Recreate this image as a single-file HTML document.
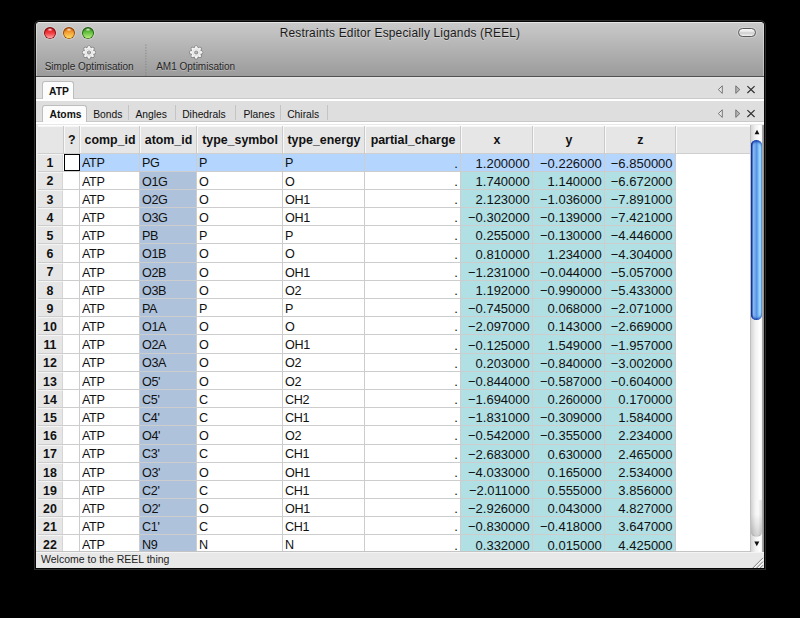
<!DOCTYPE html><html><head><meta charset="utf-8"><style>
*{margin:0;padding:0;box-sizing:border-box}
html,body{width:800px;height:618px;background:#000;overflow:hidden;font-family:"Liberation Sans",sans-serif;color:#000}
.a{position:absolute}
#win{position:absolute;left:36px;top:22px;width:728px;height:546px;background:#e8e8e8;border-radius:4px 4px 0 0;box-shadow:0 0 0 1px #050505,0 0 0 2px #2e2e2e;overflow:hidden}
#tb{position:absolute;left:0;top:0;width:728px;height:55px;background:linear-gradient(#c9c9c9,#9b9b9b);border-top:1px solid #e6e6e6;border-bottom:1px solid #515151;box-shadow:inset 1px 0 0 rgba(255,255,255,.35),inset -1px 0 0 rgba(255,255,255,.35)}
.title{position:absolute;left:0;width:728px;top:2.8px;text-align:center;font-size:11.9px;letter-spacing:0.2px;color:#1a1a1a;text-shadow:0 1px 0 rgba(255,255,255,.35)}
.tl{position:absolute;font-size:10px;color:#262626;text-shadow:0 1px 0 rgba(255,255,255,.3);white-space:nowrap}
.light{position:absolute;width:13px;height:13px;border-radius:50%}
.strip{position:absolute;left:0;width:728px}
.tab{position:absolute;font-size:10.3px;white-space:nowrap;color:#111}
.cell{position:absolute;white-space:nowrap;overflow:hidden;color:#111}
.hd{position:absolute;font-weight:bold;white-space:nowrap;text-align:center;color:#111}
.ln{position:absolute;background:#cdcdcd}
</style></head><body>
<div id="win">
<div id="tb"><div class="title">Restraints Editor Especially Ligands (REEL)</div></div>
<div class="light" style="left:7.8px;top:4.55px;width:12.4px;height:12.4px;background:radial-gradient(ellipse 3px 2px at 50% 20%,rgba(255,255,255,.95),rgba(255,255,255,0)),linear-gradient(#e0141a,#f23a3f 50%,#ffb8b8);box-shadow:inset 0 0 0 0.8px #7a0a0c,inset 0 1.2px 1.6px #7a0a0c,0 0 1px 1px rgba(255,255,255,.22)"></div>
<div class="light" style="left:26.8px;top:4.55px;width:12.4px;height:12.4px;background:radial-gradient(ellipse 3px 2px at 50% 20%,rgba(255,255,255,.95),rgba(255,255,255,0)),linear-gradient(#d9660a,#f5a63a 50%,#ffe46a);box-shadow:inset 0 0 0 0.8px #8f3e00,inset 0 1.2px 1.6px #8f3e00,0 0 1px 1px rgba(255,255,255,.22)"></div>
<div class="light" style="left:45.8px;top:4.55px;width:12.4px;height:12.4px;background:radial-gradient(ellipse 3px 2px at 50% 20%,rgba(255,255,255,.95),rgba(255,255,255,0)),linear-gradient(#2f8a1a,#6cc646 50%,#c6f08a);box-shadow:inset 0 0 0 0.8px #1d5a0c,inset 0 1.2px 1.6px #1d5a0c,0 0 1px 1px rgba(255,255,255,.22)"></div>
<div class="a" style="left:702.3px;top:6.3px;width:18px;height:8.5px;border-radius:5px;border:1px solid #5a5a5a;background:linear-gradient(#fbfbfb,#e6e6e6 40%,#cdcdcd 55%,#f2f2f2);box-shadow:0 0 1px 1px rgba(255,255,255,.25)"></div>
<div class="tl" style="left:8.7px;top:39.3px">Simple Optimisation</div>
<div class="tl" style="left:120.2px;top:39.3px">AM1 Optimisation</div>
<svg class="a" style="left:0;top:0" width="728" height="60"><line x1="109.9" y1="22.5" x2="109.9" y2="54" stroke="#858585" stroke-width="1" stroke-dasharray="1.2 1.55"/></svg>
<svg class="a" style="left:0;top:0" width="728" height="60"><g opacity="0.85"><circle cx="53" cy="30.4" r="5.5" fill="#6e6e6e"/><circle cx="53.00" cy="25.40" r="2.0" fill="#6e6e6e"/><circle cx="56.54" cy="26.86" r="2.0" fill="#6e6e6e"/><circle cx="58.00" cy="30.40" r="2.0" fill="#6e6e6e"/><circle cx="56.54" cy="33.94" r="2.0" fill="#6e6e6e"/><circle cx="53.00" cy="35.40" r="2.0" fill="#6e6e6e"/><circle cx="49.46" cy="33.94" r="2.0" fill="#6e6e6e"/><circle cx="48.00" cy="30.40" r="2.0" fill="#6e6e6e"/><circle cx="49.46" cy="26.86" r="2.0" fill="#6e6e6e"/></g><circle cx="53" cy="30.4" r="4.8" fill="#f3f3f3"/><circle cx="53.00" cy="25.40" r="1.35" fill="#f3f3f3"/><circle cx="56.54" cy="26.86" r="1.35" fill="#f3f3f3"/><circle cx="58.00" cy="30.40" r="1.35" fill="#f3f3f3"/><circle cx="56.54" cy="33.94" r="1.35" fill="#f3f3f3"/><circle cx="53.00" cy="35.40" r="1.35" fill="#f3f3f3"/><circle cx="49.46" cy="33.94" r="1.35" fill="#f3f3f3"/><circle cx="48.00" cy="30.40" r="1.35" fill="#f3f3f3"/><circle cx="49.46" cy="26.86" r="1.35" fill="#f3f3f3"/><circle cx="53" cy="30.4" r="3.4" fill="none" stroke="#dcdcdc" stroke-width="0.8"/><circle cx="53" cy="30.4" r="2.0" fill="#8e8e8e"/><circle cx="53" cy="30.4" r="1.1" fill="#b8b8b8"/><g opacity="0.85"><circle cx="160.2" cy="30.4" r="5.5" fill="#6e6e6e"/><circle cx="160.20" cy="25.40" r="2.0" fill="#6e6e6e"/><circle cx="163.74" cy="26.86" r="2.0" fill="#6e6e6e"/><circle cx="165.20" cy="30.40" r="2.0" fill="#6e6e6e"/><circle cx="163.74" cy="33.94" r="2.0" fill="#6e6e6e"/><circle cx="160.20" cy="35.40" r="2.0" fill="#6e6e6e"/><circle cx="156.66" cy="33.94" r="2.0" fill="#6e6e6e"/><circle cx="155.20" cy="30.40" r="2.0" fill="#6e6e6e"/><circle cx="156.66" cy="26.86" r="2.0" fill="#6e6e6e"/></g><circle cx="160.2" cy="30.4" r="4.8" fill="#f3f3f3"/><circle cx="160.20" cy="25.40" r="1.35" fill="#f3f3f3"/><circle cx="163.74" cy="26.86" r="1.35" fill="#f3f3f3"/><circle cx="165.20" cy="30.40" r="1.35" fill="#f3f3f3"/><circle cx="163.74" cy="33.94" r="1.35" fill="#f3f3f3"/><circle cx="160.20" cy="35.40" r="1.35" fill="#f3f3f3"/><circle cx="156.66" cy="33.94" r="1.35" fill="#f3f3f3"/><circle cx="155.20" cy="30.40" r="1.35" fill="#f3f3f3"/><circle cx="156.66" cy="26.86" r="1.35" fill="#f3f3f3"/><circle cx="160.2" cy="30.4" r="3.4" fill="none" stroke="#dcdcdc" stroke-width="0.8"/><circle cx="160.2" cy="30.4" r="2.0" fill="#8e8e8e"/><circle cx="160.2" cy="30.4" r="1.1" fill="#b8b8b8"/></svg>
<div class="strip" style="top:55px;height:22px;background:linear-gradient(#e6e6e6 0,#e6e6e6 1px,#dedede 2px);border-bottom:1px solid #c9c9c9"></div>
<div class="strip" style="top:77px;height:2px;background:#fff"></div>
<div class="a" style="left:6px;top:58.8px;width:31.5px;height:18.2px;background:#fcfcfc;border:1px solid #bdbdbd;border-bottom:none;border-radius:3px 3px 0 0"></div>
<div class="tab" style="left:13px;top:63.7px;font-weight:bold">ATP</div>
<div class="strip" style="top:79px;height:21.2px;background:#dedede;border-bottom:1px solid #c9c9c9"></div>
<div class="strip" style="top:100.2px;height:2.3px;background:#fff"></div>
<div class="a" style="left:6.3px;top:82.6px;width:44.3px;height:17.6px;background:#fcfcfc;border:1px solid #bdbdbd;border-bottom:none;border-radius:3px 3px 0 0"></div>
<div class="tab" style="left:13.5px;top:87.0px;font-weight:bold">Atoms</div>
<div class="tab" style="left:57.2px;top:87.0px;">Bonds</div>
<div class="tab" style="left:99.4px;top:87.0px;">Angles</div>
<div class="tab" style="left:146.2px;top:87.0px;">Dihedrals</div>
<div class="tab" style="left:207.4px;top:87.0px;">Planes</div>
<div class="tab" style="left:251.2px;top:87.0px;">Chirals</div>
<div class="a" style="left:92px;top:82.5px;width:1px;height:15px;background:#c4c4c4"></div>
<div class="a" style="left:139px;top:82.5px;width:1px;height:15px;background:#c4c4c4"></div>
<div class="a" style="left:199px;top:82.5px;width:1px;height:15px;background:#c4c4c4"></div>
<div class="a" style="left:244px;top:82.5px;width:1px;height:15px;background:#c4c4c4"></div>
<div class="a" style="left:291px;top:82.5px;width:1px;height:15px;background:#c4c4c4"></div>
<svg class="a" style="left:0;top:0" width="728" height="110"><polygon points="686.3,63.8 686.3,71.39999999999999 682.3,67.6" fill="#e8e8e8" stroke="#6a6a6a" stroke-width="0.9" stroke-linejoin="round"/><polygon points="699.8,63.8 699.8,71.39999999999999 703.8,67.6" fill="#b4b4b4" stroke="#6a6a6a" stroke-width="0.9" stroke-linejoin="round"/><path d="M711.4 64.19999999999999 L718.6 71.0 M718.6 64.19999999999999 L711.4 71.0" stroke="#2e2e2e" stroke-width="1.15"/><polygon points="686.3,87.8 686.3,95.39999999999999 682.3,91.6" fill="#e8e8e8" stroke="#6a6a6a" stroke-width="0.9" stroke-linejoin="round"/><polygon points="699.8,87.8 699.8,95.39999999999999 703.8,91.6" fill="#b4b4b4" stroke="#6a6a6a" stroke-width="0.9" stroke-linejoin="round"/><path d="M711.4 88.19999999999999 L718.6 95.0 M718.6 88.19999999999999 L711.4 95.0" stroke="#2e2e2e" stroke-width="1.15"/></svg>
<div class="a" style="left:0;top:102.5px;width:714px;height:427.5px;background:#fff"></div>
<div class="a" style="left:0;top:102.5px;width:2px;height:427.5px;background:#ebebeb"></div>
<div class="a" style="left:2px;top:103.5px;width:712px;height:28.0px;background:#e6e6e6;border-top:1px solid #f6f6f6;border-bottom:1px solid #cfcfcf"></div>
<div class="hd" style="left:2px;top:104.2px;width:25.5px;line-height:28.0px;font-size:12.4px"></div>
<div class="hd" style="left:27.5px;top:104.2px;width:16.5px;line-height:28.0px;font-size:12.4px">?</div>
<div class="hd" style="left:44px;top:104.2px;width:60px;line-height:28.0px;font-size:12.4px">comp_id</div>
<div class="hd" style="left:104px;top:104.2px;width:57px;line-height:28.0px;font-size:12.4px">atom_id</div>
<div class="hd" style="left:161px;top:104.2px;width:86px;line-height:28.0px;font-size:12.4px">type_symbol</div>
<div class="hd" style="left:247px;top:104.2px;width:82px;line-height:28.0px;font-size:12.4px">type_energy</div>
<div class="hd" style="left:329px;top:104.2px;width:96px;line-height:28.0px;font-size:12.4px">partial_charge</div>
<div class="hd" style="left:425px;top:104.2px;width:72px;line-height:28.0px;font-size:12.4px">x</div>
<div class="hd" style="left:497px;top:104.2px;width:72px;line-height:28.0px;font-size:12.4px">y</div>
<div class="hd" style="left:569px;top:104.2px;width:70.79999999999995px;line-height:28.0px;font-size:12.4px">z</div>
<div class="a" style="left:26.5px;top:103.5px;width:1px;height:28.0px;background:#cacaca"></div>
<div class="a" style="left:27.5px;top:103.5px;width:1px;height:27.0px;background:#f8f8f8"></div>
<div class="a" style="left:43px;top:103.5px;width:1px;height:28.0px;background:#cacaca"></div>
<div class="a" style="left:44px;top:103.5px;width:1px;height:27.0px;background:#f8f8f8"></div>
<div class="a" style="left:103px;top:103.5px;width:1px;height:28.0px;background:#cacaca"></div>
<div class="a" style="left:104px;top:103.5px;width:1px;height:27.0px;background:#f8f8f8"></div>
<div class="a" style="left:160px;top:103.5px;width:1px;height:28.0px;background:#cacaca"></div>
<div class="a" style="left:161px;top:103.5px;width:1px;height:27.0px;background:#f8f8f8"></div>
<div class="a" style="left:246px;top:103.5px;width:1px;height:28.0px;background:#cacaca"></div>
<div class="a" style="left:247px;top:103.5px;width:1px;height:27.0px;background:#f8f8f8"></div>
<div class="a" style="left:328px;top:103.5px;width:1px;height:28.0px;background:#cacaca"></div>
<div class="a" style="left:329px;top:103.5px;width:1px;height:27.0px;background:#f8f8f8"></div>
<div class="a" style="left:424px;top:103.5px;width:1px;height:28.0px;background:#cacaca"></div>
<div class="a" style="left:425px;top:103.5px;width:1px;height:27.0px;background:#f8f8f8"></div>
<div class="a" style="left:496px;top:103.5px;width:1px;height:28.0px;background:#cacaca"></div>
<div class="a" style="left:497px;top:103.5px;width:1px;height:27.0px;background:#f8f8f8"></div>
<div class="a" style="left:568px;top:103.5px;width:1px;height:28.0px;background:#cacaca"></div>
<div class="a" style="left:569px;top:103.5px;width:1px;height:27.0px;background:#f8f8f8"></div>
<div class="a" style="left:638.8px;top:103.5px;width:1px;height:28.0px;background:#cacaca"></div>
<div class="a" style="left:639.8px;top:103.5px;width:1px;height:27.0px;background:#f8f8f8"></div>
<div class="a" style="left:2px;top:131.5px;width:25.0px;height:18.19px;background:#e6e6e6;border-top:1px solid #f4f4f4;border-right:1px solid #d6d6d6"></div>
<div class="a" style="left:44px;top:131.5px;width:595.8px;height:18.19px;background:#b4d5fe"></div>
<div class="hd" style="left:1.2px;top:132.3px;width:25.5px;line-height:18.19px;font-size:12.4px">1</div>
<div class="cell" style="left:46px;top:132.4px;width:58px;line-height:18.19px;font-size:12.6px;letter-spacing:-0.35px">ATP</div>
<div class="cell" style="left:106px;top:132.4px;width:55px;line-height:18.19px;font-size:12.6px;letter-spacing:-0.35px">PG</div>
<div class="cell" style="left:163px;top:132.4px;width:84px;line-height:18.19px;font-size:12.6px;letter-spacing:-0.35px">P</div>
<div class="cell" style="left:249px;top:132.4px;width:80px;line-height:18.19px;font-size:12.6px;letter-spacing:-0.35px">P</div>
<div class="cell" style="left:329px;top:132.6px;width:92.8px;text-align:right;line-height:18.19px;font-size:13px">.</div>
<div class="cell" style="left:425px;top:132.6px;width:68.8px;text-align:right;line-height:18.19px;font-size:13px">1.200000</div>
<div class="cell" style="left:497px;top:132.6px;width:68.8px;text-align:right;line-height:18.19px;font-size:13px">−0.226000</div>
<div class="cell" style="left:569px;top:132.6px;width:67.59999999999995px;text-align:right;line-height:18.19px;font-size:13px">−6.850000</div>
<div class="a" style="left:2px;top:149.69px;width:25.0px;height:18.19px;background:#e6e6e6;border-top:1px solid #f4f4f4;border-right:1px solid #d6d6d6"></div>
<div class="a" style="left:104px;top:149.69px;width:57px;height:18.19px;background:#aec2dc"></div>
<div class="a" style="left:425px;top:149.69px;width:214.79999999999995px;height:18.19px;background:#b0dfe4"></div>
<div class="hd" style="left:1.2px;top:150.49px;width:25.5px;line-height:18.19px;font-size:12.4px">2</div>
<div class="cell" style="left:46px;top:150.59px;width:58px;line-height:18.19px;font-size:12.6px;letter-spacing:-0.35px">ATP</div>
<div class="cell" style="left:106px;top:150.59px;width:55px;line-height:18.19px;font-size:12.6px;letter-spacing:-0.35px">O1G</div>
<div class="cell" style="left:163px;top:150.59px;width:84px;line-height:18.19px;font-size:12.6px;letter-spacing:-0.35px">O</div>
<div class="cell" style="left:249px;top:150.59px;width:80px;line-height:18.19px;font-size:12.6px;letter-spacing:-0.35px">O</div>
<div class="cell" style="left:329px;top:150.79px;width:92.8px;text-align:right;line-height:18.19px;font-size:13px">.</div>
<div class="cell" style="left:425px;top:150.79px;width:68.8px;text-align:right;line-height:18.19px;font-size:13px">1.740000</div>
<div class="cell" style="left:497px;top:150.79px;width:68.8px;text-align:right;line-height:18.19px;font-size:13px">1.140000</div>
<div class="cell" style="left:569px;top:150.79px;width:67.59999999999995px;text-align:right;line-height:18.19px;font-size:13px">−6.672000</div>
<div class="a" style="left:2px;top:167.88px;width:25.0px;height:18.19px;background:#e6e6e6;border-top:1px solid #f4f4f4;border-right:1px solid #d6d6d6"></div>
<div class="a" style="left:104px;top:167.88px;width:57px;height:18.19px;background:#aec2dc"></div>
<div class="a" style="left:425px;top:167.88px;width:214.79999999999995px;height:18.19px;background:#b0dfe4"></div>
<div class="hd" style="left:1.2px;top:168.68px;width:25.5px;line-height:18.19px;font-size:12.4px">3</div>
<div class="cell" style="left:46px;top:168.78px;width:58px;line-height:18.19px;font-size:12.6px;letter-spacing:-0.35px">ATP</div>
<div class="cell" style="left:106px;top:168.78px;width:55px;line-height:18.19px;font-size:12.6px;letter-spacing:-0.35px">O2G</div>
<div class="cell" style="left:163px;top:168.78px;width:84px;line-height:18.19px;font-size:12.6px;letter-spacing:-0.35px">O</div>
<div class="cell" style="left:249px;top:168.78px;width:80px;line-height:18.19px;font-size:12.6px;letter-spacing:-0.35px">OH1</div>
<div class="cell" style="left:329px;top:168.98px;width:92.8px;text-align:right;line-height:18.19px;font-size:13px">.</div>
<div class="cell" style="left:425px;top:168.98px;width:68.8px;text-align:right;line-height:18.19px;font-size:13px">2.123000</div>
<div class="cell" style="left:497px;top:168.98px;width:68.8px;text-align:right;line-height:18.19px;font-size:13px">−1.036000</div>
<div class="cell" style="left:569px;top:168.98px;width:67.59999999999995px;text-align:right;line-height:18.19px;font-size:13px">−7.891000</div>
<div class="a" style="left:2px;top:186.07px;width:25.0px;height:18.19px;background:#e6e6e6;border-top:1px solid #f4f4f4;border-right:1px solid #d6d6d6"></div>
<div class="a" style="left:104px;top:186.07px;width:57px;height:18.19px;background:#aec2dc"></div>
<div class="a" style="left:425px;top:186.07px;width:214.79999999999995px;height:18.19px;background:#b0dfe4"></div>
<div class="hd" style="left:1.2px;top:186.87px;width:25.5px;line-height:18.19px;font-size:12.4px">4</div>
<div class="cell" style="left:46px;top:186.97px;width:58px;line-height:18.19px;font-size:12.6px;letter-spacing:-0.35px">ATP</div>
<div class="cell" style="left:106px;top:186.97px;width:55px;line-height:18.19px;font-size:12.6px;letter-spacing:-0.35px">O3G</div>
<div class="cell" style="left:163px;top:186.97px;width:84px;line-height:18.19px;font-size:12.6px;letter-spacing:-0.35px">O</div>
<div class="cell" style="left:249px;top:186.97px;width:80px;line-height:18.19px;font-size:12.6px;letter-spacing:-0.35px">OH1</div>
<div class="cell" style="left:329px;top:187.17px;width:92.8px;text-align:right;line-height:18.19px;font-size:13px">.</div>
<div class="cell" style="left:425px;top:187.17px;width:68.8px;text-align:right;line-height:18.19px;font-size:13px">−0.302000</div>
<div class="cell" style="left:497px;top:187.17px;width:68.8px;text-align:right;line-height:18.19px;font-size:13px">−0.139000</div>
<div class="cell" style="left:569px;top:187.17px;width:67.59999999999995px;text-align:right;line-height:18.19px;font-size:13px">−7.421000</div>
<div class="a" style="left:2px;top:204.26px;width:25.0px;height:18.19px;background:#e6e6e6;border-top:1px solid #f4f4f4;border-right:1px solid #d6d6d6"></div>
<div class="a" style="left:104px;top:204.26px;width:57px;height:18.19px;background:#aec2dc"></div>
<div class="a" style="left:425px;top:204.26px;width:214.79999999999995px;height:18.19px;background:#b0dfe4"></div>
<div class="hd" style="left:1.2px;top:205.06px;width:25.5px;line-height:18.19px;font-size:12.4px">5</div>
<div class="cell" style="left:46px;top:205.16px;width:58px;line-height:18.19px;font-size:12.6px;letter-spacing:-0.35px">ATP</div>
<div class="cell" style="left:106px;top:205.16px;width:55px;line-height:18.19px;font-size:12.6px;letter-spacing:-0.35px">PB</div>
<div class="cell" style="left:163px;top:205.16px;width:84px;line-height:18.19px;font-size:12.6px;letter-spacing:-0.35px">P</div>
<div class="cell" style="left:249px;top:205.16px;width:80px;line-height:18.19px;font-size:12.6px;letter-spacing:-0.35px">P</div>
<div class="cell" style="left:329px;top:205.36px;width:92.8px;text-align:right;line-height:18.19px;font-size:13px">.</div>
<div class="cell" style="left:425px;top:205.36px;width:68.8px;text-align:right;line-height:18.19px;font-size:13px">0.255000</div>
<div class="cell" style="left:497px;top:205.36px;width:68.8px;text-align:right;line-height:18.19px;font-size:13px">−0.130000</div>
<div class="cell" style="left:569px;top:205.36px;width:67.59999999999995px;text-align:right;line-height:18.19px;font-size:13px">−4.446000</div>
<div class="a" style="left:2px;top:222.45px;width:25.0px;height:18.19px;background:#e6e6e6;border-top:1px solid #f4f4f4;border-right:1px solid #d6d6d6"></div>
<div class="a" style="left:104px;top:222.45px;width:57px;height:18.19px;background:#aec2dc"></div>
<div class="a" style="left:425px;top:222.45px;width:214.79999999999995px;height:18.19px;background:#b0dfe4"></div>
<div class="hd" style="left:1.2px;top:223.25px;width:25.5px;line-height:18.19px;font-size:12.4px">6</div>
<div class="cell" style="left:46px;top:223.35px;width:58px;line-height:18.19px;font-size:12.6px;letter-spacing:-0.35px">ATP</div>
<div class="cell" style="left:106px;top:223.35px;width:55px;line-height:18.19px;font-size:12.6px;letter-spacing:-0.35px">O1B</div>
<div class="cell" style="left:163px;top:223.35px;width:84px;line-height:18.19px;font-size:12.6px;letter-spacing:-0.35px">O</div>
<div class="cell" style="left:249px;top:223.35px;width:80px;line-height:18.19px;font-size:12.6px;letter-spacing:-0.35px">O</div>
<div class="cell" style="left:329px;top:223.55px;width:92.8px;text-align:right;line-height:18.19px;font-size:13px">.</div>
<div class="cell" style="left:425px;top:223.55px;width:68.8px;text-align:right;line-height:18.19px;font-size:13px">0.810000</div>
<div class="cell" style="left:497px;top:223.55px;width:68.8px;text-align:right;line-height:18.19px;font-size:13px">1.234000</div>
<div class="cell" style="left:569px;top:223.55px;width:67.59999999999995px;text-align:right;line-height:18.19px;font-size:13px">−4.304000</div>
<div class="a" style="left:2px;top:240.64px;width:25.0px;height:18.19px;background:#e6e6e6;border-top:1px solid #f4f4f4;border-right:1px solid #d6d6d6"></div>
<div class="a" style="left:104px;top:240.64px;width:57px;height:18.19px;background:#aec2dc"></div>
<div class="a" style="left:425px;top:240.64px;width:214.79999999999995px;height:18.19px;background:#b0dfe4"></div>
<div class="hd" style="left:1.2px;top:241.44px;width:25.5px;line-height:18.19px;font-size:12.4px">7</div>
<div class="cell" style="left:46px;top:241.54px;width:58px;line-height:18.19px;font-size:12.6px;letter-spacing:-0.35px">ATP</div>
<div class="cell" style="left:106px;top:241.54px;width:55px;line-height:18.19px;font-size:12.6px;letter-spacing:-0.35px">O2B</div>
<div class="cell" style="left:163px;top:241.54px;width:84px;line-height:18.19px;font-size:12.6px;letter-spacing:-0.35px">O</div>
<div class="cell" style="left:249px;top:241.54px;width:80px;line-height:18.19px;font-size:12.6px;letter-spacing:-0.35px">OH1</div>
<div class="cell" style="left:329px;top:241.74px;width:92.8px;text-align:right;line-height:18.19px;font-size:13px">.</div>
<div class="cell" style="left:425px;top:241.74px;width:68.8px;text-align:right;line-height:18.19px;font-size:13px">−1.231000</div>
<div class="cell" style="left:497px;top:241.74px;width:68.8px;text-align:right;line-height:18.19px;font-size:13px">−0.044000</div>
<div class="cell" style="left:569px;top:241.74px;width:67.59999999999995px;text-align:right;line-height:18.19px;font-size:13px">−5.057000</div>
<div class="a" style="left:2px;top:258.83px;width:25.0px;height:18.19px;background:#e6e6e6;border-top:1px solid #f4f4f4;border-right:1px solid #d6d6d6"></div>
<div class="a" style="left:104px;top:258.83px;width:57px;height:18.19px;background:#aec2dc"></div>
<div class="a" style="left:425px;top:258.83px;width:214.79999999999995px;height:18.19px;background:#b0dfe4"></div>
<div class="hd" style="left:1.2px;top:259.63px;width:25.5px;line-height:18.19px;font-size:12.4px">8</div>
<div class="cell" style="left:46px;top:259.73px;width:58px;line-height:18.19px;font-size:12.6px;letter-spacing:-0.35px">ATP</div>
<div class="cell" style="left:106px;top:259.73px;width:55px;line-height:18.19px;font-size:12.6px;letter-spacing:-0.35px">O3B</div>
<div class="cell" style="left:163px;top:259.73px;width:84px;line-height:18.19px;font-size:12.6px;letter-spacing:-0.35px">O</div>
<div class="cell" style="left:249px;top:259.73px;width:80px;line-height:18.19px;font-size:12.6px;letter-spacing:-0.35px">O2</div>
<div class="cell" style="left:329px;top:259.93px;width:92.8px;text-align:right;line-height:18.19px;font-size:13px">.</div>
<div class="cell" style="left:425px;top:259.93px;width:68.8px;text-align:right;line-height:18.19px;font-size:13px">1.192000</div>
<div class="cell" style="left:497px;top:259.93px;width:68.8px;text-align:right;line-height:18.19px;font-size:13px">−0.990000</div>
<div class="cell" style="left:569px;top:259.93px;width:67.59999999999995px;text-align:right;line-height:18.19px;font-size:13px">−5.433000</div>
<div class="a" style="left:2px;top:277.02px;width:25.0px;height:18.19px;background:#e6e6e6;border-top:1px solid #f4f4f4;border-right:1px solid #d6d6d6"></div>
<div class="a" style="left:104px;top:277.02px;width:57px;height:18.19px;background:#aec2dc"></div>
<div class="a" style="left:425px;top:277.02px;width:214.79999999999995px;height:18.19px;background:#b0dfe4"></div>
<div class="hd" style="left:1.2px;top:277.82px;width:25.5px;line-height:18.19px;font-size:12.4px">9</div>
<div class="cell" style="left:46px;top:277.92px;width:58px;line-height:18.19px;font-size:12.6px;letter-spacing:-0.35px">ATP</div>
<div class="cell" style="left:106px;top:277.92px;width:55px;line-height:18.19px;font-size:12.6px;letter-spacing:-0.35px">PA</div>
<div class="cell" style="left:163px;top:277.92px;width:84px;line-height:18.19px;font-size:12.6px;letter-spacing:-0.35px">P</div>
<div class="cell" style="left:249px;top:277.92px;width:80px;line-height:18.19px;font-size:12.6px;letter-spacing:-0.35px">P</div>
<div class="cell" style="left:329px;top:278.12px;width:92.8px;text-align:right;line-height:18.19px;font-size:13px">.</div>
<div class="cell" style="left:425px;top:278.12px;width:68.8px;text-align:right;line-height:18.19px;font-size:13px">−0.745000</div>
<div class="cell" style="left:497px;top:278.12px;width:68.8px;text-align:right;line-height:18.19px;font-size:13px">0.068000</div>
<div class="cell" style="left:569px;top:278.12px;width:67.59999999999995px;text-align:right;line-height:18.19px;font-size:13px">−2.071000</div>
<div class="a" style="left:2px;top:295.21px;width:25.0px;height:18.19px;background:#e6e6e6;border-top:1px solid #f4f4f4;border-right:1px solid #d6d6d6"></div>
<div class="a" style="left:104px;top:295.21px;width:57px;height:18.19px;background:#aec2dc"></div>
<div class="a" style="left:425px;top:295.21px;width:214.79999999999995px;height:18.19px;background:#b0dfe4"></div>
<div class="hd" style="left:1.2px;top:296.01px;width:25.5px;line-height:18.19px;font-size:12.4px">10</div>
<div class="cell" style="left:46px;top:296.11px;width:58px;line-height:18.19px;font-size:12.6px;letter-spacing:-0.35px">ATP</div>
<div class="cell" style="left:106px;top:296.11px;width:55px;line-height:18.19px;font-size:12.6px;letter-spacing:-0.35px">O1A</div>
<div class="cell" style="left:163px;top:296.11px;width:84px;line-height:18.19px;font-size:12.6px;letter-spacing:-0.35px">O</div>
<div class="cell" style="left:249px;top:296.11px;width:80px;line-height:18.19px;font-size:12.6px;letter-spacing:-0.35px">O</div>
<div class="cell" style="left:329px;top:296.31px;width:92.8px;text-align:right;line-height:18.19px;font-size:13px">.</div>
<div class="cell" style="left:425px;top:296.31px;width:68.8px;text-align:right;line-height:18.19px;font-size:13px">−2.097000</div>
<div class="cell" style="left:497px;top:296.31px;width:68.8px;text-align:right;line-height:18.19px;font-size:13px">0.143000</div>
<div class="cell" style="left:569px;top:296.31px;width:67.59999999999995px;text-align:right;line-height:18.19px;font-size:13px">−2.669000</div>
<div class="a" style="left:2px;top:313.4px;width:25.0px;height:18.19px;background:#e6e6e6;border-top:1px solid #f4f4f4;border-right:1px solid #d6d6d6"></div>
<div class="a" style="left:104px;top:313.4px;width:57px;height:18.19px;background:#aec2dc"></div>
<div class="a" style="left:425px;top:313.4px;width:214.79999999999995px;height:18.19px;background:#b0dfe4"></div>
<div class="hd" style="left:1.2px;top:314.2px;width:25.5px;line-height:18.19px;font-size:12.4px">11</div>
<div class="cell" style="left:46px;top:314.3px;width:58px;line-height:18.19px;font-size:12.6px;letter-spacing:-0.35px">ATP</div>
<div class="cell" style="left:106px;top:314.3px;width:55px;line-height:18.19px;font-size:12.6px;letter-spacing:-0.35px">O2A</div>
<div class="cell" style="left:163px;top:314.3px;width:84px;line-height:18.19px;font-size:12.6px;letter-spacing:-0.35px">O</div>
<div class="cell" style="left:249px;top:314.3px;width:80px;line-height:18.19px;font-size:12.6px;letter-spacing:-0.35px">OH1</div>
<div class="cell" style="left:329px;top:314.5px;width:92.8px;text-align:right;line-height:18.19px;font-size:13px">.</div>
<div class="cell" style="left:425px;top:314.5px;width:68.8px;text-align:right;line-height:18.19px;font-size:13px">−0.125000</div>
<div class="cell" style="left:497px;top:314.5px;width:68.8px;text-align:right;line-height:18.19px;font-size:13px">1.549000</div>
<div class="cell" style="left:569px;top:314.5px;width:67.59999999999995px;text-align:right;line-height:18.19px;font-size:13px">−1.957000</div>
<div class="a" style="left:2px;top:331.59px;width:25.0px;height:18.19px;background:#e6e6e6;border-top:1px solid #f4f4f4;border-right:1px solid #d6d6d6"></div>
<div class="a" style="left:104px;top:331.59px;width:57px;height:18.19px;background:#aec2dc"></div>
<div class="a" style="left:425px;top:331.59px;width:214.79999999999995px;height:18.19px;background:#b0dfe4"></div>
<div class="hd" style="left:1.2px;top:332.39px;width:25.5px;line-height:18.19px;font-size:12.4px">12</div>
<div class="cell" style="left:46px;top:332.49px;width:58px;line-height:18.19px;font-size:12.6px;letter-spacing:-0.35px">ATP</div>
<div class="cell" style="left:106px;top:332.49px;width:55px;line-height:18.19px;font-size:12.6px;letter-spacing:-0.35px">O3A</div>
<div class="cell" style="left:163px;top:332.49px;width:84px;line-height:18.19px;font-size:12.6px;letter-spacing:-0.35px">O</div>
<div class="cell" style="left:249px;top:332.49px;width:80px;line-height:18.19px;font-size:12.6px;letter-spacing:-0.35px">O2</div>
<div class="cell" style="left:329px;top:332.69px;width:92.8px;text-align:right;line-height:18.19px;font-size:13px">.</div>
<div class="cell" style="left:425px;top:332.69px;width:68.8px;text-align:right;line-height:18.19px;font-size:13px">0.203000</div>
<div class="cell" style="left:497px;top:332.69px;width:68.8px;text-align:right;line-height:18.19px;font-size:13px">−0.840000</div>
<div class="cell" style="left:569px;top:332.69px;width:67.59999999999995px;text-align:right;line-height:18.19px;font-size:13px">−3.002000</div>
<div class="a" style="left:2px;top:349.78px;width:25.0px;height:18.19px;background:#e6e6e6;border-top:1px solid #f4f4f4;border-right:1px solid #d6d6d6"></div>
<div class="a" style="left:104px;top:349.78px;width:57px;height:18.19px;background:#aec2dc"></div>
<div class="a" style="left:425px;top:349.78px;width:214.79999999999995px;height:18.19px;background:#b0dfe4"></div>
<div class="hd" style="left:1.2px;top:350.58px;width:25.5px;line-height:18.19px;font-size:12.4px">13</div>
<div class="cell" style="left:46px;top:350.68px;width:58px;line-height:18.19px;font-size:12.6px;letter-spacing:-0.35px">ATP</div>
<div class="cell" style="left:106px;top:350.68px;width:55px;line-height:18.19px;font-size:12.6px;letter-spacing:-0.35px">O5'</div>
<div class="cell" style="left:163px;top:350.68px;width:84px;line-height:18.19px;font-size:12.6px;letter-spacing:-0.35px">O</div>
<div class="cell" style="left:249px;top:350.68px;width:80px;line-height:18.19px;font-size:12.6px;letter-spacing:-0.35px">O2</div>
<div class="cell" style="left:329px;top:350.88px;width:92.8px;text-align:right;line-height:18.19px;font-size:13px">.</div>
<div class="cell" style="left:425px;top:350.88px;width:68.8px;text-align:right;line-height:18.19px;font-size:13px">−0.844000</div>
<div class="cell" style="left:497px;top:350.88px;width:68.8px;text-align:right;line-height:18.19px;font-size:13px">−0.587000</div>
<div class="cell" style="left:569px;top:350.88px;width:67.59999999999995px;text-align:right;line-height:18.19px;font-size:13px">−0.604000</div>
<div class="a" style="left:2px;top:367.97px;width:25.0px;height:18.19px;background:#e6e6e6;border-top:1px solid #f4f4f4;border-right:1px solid #d6d6d6"></div>
<div class="a" style="left:104px;top:367.97px;width:57px;height:18.19px;background:#aec2dc"></div>
<div class="a" style="left:425px;top:367.97px;width:214.79999999999995px;height:18.19px;background:#b0dfe4"></div>
<div class="hd" style="left:1.2px;top:368.77px;width:25.5px;line-height:18.19px;font-size:12.4px">14</div>
<div class="cell" style="left:46px;top:368.87px;width:58px;line-height:18.19px;font-size:12.6px;letter-spacing:-0.35px">ATP</div>
<div class="cell" style="left:106px;top:368.87px;width:55px;line-height:18.19px;font-size:12.6px;letter-spacing:-0.35px">C5'</div>
<div class="cell" style="left:163px;top:368.87px;width:84px;line-height:18.19px;font-size:12.6px;letter-spacing:-0.35px">C</div>
<div class="cell" style="left:249px;top:368.87px;width:80px;line-height:18.19px;font-size:12.6px;letter-spacing:-0.35px">CH2</div>
<div class="cell" style="left:329px;top:369.07px;width:92.8px;text-align:right;line-height:18.19px;font-size:13px">.</div>
<div class="cell" style="left:425px;top:369.07px;width:68.8px;text-align:right;line-height:18.19px;font-size:13px">−1.694000</div>
<div class="cell" style="left:497px;top:369.07px;width:68.8px;text-align:right;line-height:18.19px;font-size:13px">0.260000</div>
<div class="cell" style="left:569px;top:369.07px;width:67.59999999999995px;text-align:right;line-height:18.19px;font-size:13px">0.170000</div>
<div class="a" style="left:2px;top:386.16px;width:25.0px;height:18.19px;background:#e6e6e6;border-top:1px solid #f4f4f4;border-right:1px solid #d6d6d6"></div>
<div class="a" style="left:104px;top:386.16px;width:57px;height:18.19px;background:#aec2dc"></div>
<div class="a" style="left:425px;top:386.16px;width:214.79999999999995px;height:18.19px;background:#b0dfe4"></div>
<div class="hd" style="left:1.2px;top:386.96px;width:25.5px;line-height:18.19px;font-size:12.4px">15</div>
<div class="cell" style="left:46px;top:387.06px;width:58px;line-height:18.19px;font-size:12.6px;letter-spacing:-0.35px">ATP</div>
<div class="cell" style="left:106px;top:387.06px;width:55px;line-height:18.19px;font-size:12.6px;letter-spacing:-0.35px">C4'</div>
<div class="cell" style="left:163px;top:387.06px;width:84px;line-height:18.19px;font-size:12.6px;letter-spacing:-0.35px">C</div>
<div class="cell" style="left:249px;top:387.06px;width:80px;line-height:18.19px;font-size:12.6px;letter-spacing:-0.35px">CH1</div>
<div class="cell" style="left:329px;top:387.26px;width:92.8px;text-align:right;line-height:18.19px;font-size:13px">.</div>
<div class="cell" style="left:425px;top:387.26px;width:68.8px;text-align:right;line-height:18.19px;font-size:13px">−1.831000</div>
<div class="cell" style="left:497px;top:387.26px;width:68.8px;text-align:right;line-height:18.19px;font-size:13px">−0.309000</div>
<div class="cell" style="left:569px;top:387.26px;width:67.59999999999995px;text-align:right;line-height:18.19px;font-size:13px">1.584000</div>
<div class="a" style="left:2px;top:404.35px;width:25.0px;height:18.19px;background:#e6e6e6;border-top:1px solid #f4f4f4;border-right:1px solid #d6d6d6"></div>
<div class="a" style="left:104px;top:404.35px;width:57px;height:18.19px;background:#aec2dc"></div>
<div class="a" style="left:425px;top:404.35px;width:214.79999999999995px;height:18.19px;background:#b0dfe4"></div>
<div class="hd" style="left:1.2px;top:405.15px;width:25.5px;line-height:18.19px;font-size:12.4px">16</div>
<div class="cell" style="left:46px;top:405.25px;width:58px;line-height:18.19px;font-size:12.6px;letter-spacing:-0.35px">ATP</div>
<div class="cell" style="left:106px;top:405.25px;width:55px;line-height:18.19px;font-size:12.6px;letter-spacing:-0.35px">O4'</div>
<div class="cell" style="left:163px;top:405.25px;width:84px;line-height:18.19px;font-size:12.6px;letter-spacing:-0.35px">O</div>
<div class="cell" style="left:249px;top:405.25px;width:80px;line-height:18.19px;font-size:12.6px;letter-spacing:-0.35px">O2</div>
<div class="cell" style="left:329px;top:405.45px;width:92.8px;text-align:right;line-height:18.19px;font-size:13px">.</div>
<div class="cell" style="left:425px;top:405.45px;width:68.8px;text-align:right;line-height:18.19px;font-size:13px">−0.542000</div>
<div class="cell" style="left:497px;top:405.45px;width:68.8px;text-align:right;line-height:18.19px;font-size:13px">−0.355000</div>
<div class="cell" style="left:569px;top:405.45px;width:67.59999999999995px;text-align:right;line-height:18.19px;font-size:13px">2.234000</div>
<div class="a" style="left:2px;top:422.54px;width:25.0px;height:18.19px;background:#e6e6e6;border-top:1px solid #f4f4f4;border-right:1px solid #d6d6d6"></div>
<div class="a" style="left:104px;top:422.54px;width:57px;height:18.19px;background:#aec2dc"></div>
<div class="a" style="left:425px;top:422.54px;width:214.79999999999995px;height:18.19px;background:#b0dfe4"></div>
<div class="hd" style="left:1.2px;top:423.34px;width:25.5px;line-height:18.19px;font-size:12.4px">17</div>
<div class="cell" style="left:46px;top:423.44px;width:58px;line-height:18.19px;font-size:12.6px;letter-spacing:-0.35px">ATP</div>
<div class="cell" style="left:106px;top:423.44px;width:55px;line-height:18.19px;font-size:12.6px;letter-spacing:-0.35px">C3'</div>
<div class="cell" style="left:163px;top:423.44px;width:84px;line-height:18.19px;font-size:12.6px;letter-spacing:-0.35px">C</div>
<div class="cell" style="left:249px;top:423.44px;width:80px;line-height:18.19px;font-size:12.6px;letter-spacing:-0.35px">CH1</div>
<div class="cell" style="left:329px;top:423.64px;width:92.8px;text-align:right;line-height:18.19px;font-size:13px">.</div>
<div class="cell" style="left:425px;top:423.64px;width:68.8px;text-align:right;line-height:18.19px;font-size:13px">−2.683000</div>
<div class="cell" style="left:497px;top:423.64px;width:68.8px;text-align:right;line-height:18.19px;font-size:13px">0.630000</div>
<div class="cell" style="left:569px;top:423.64px;width:67.59999999999995px;text-align:right;line-height:18.19px;font-size:13px">2.465000</div>
<div class="a" style="left:2px;top:440.73px;width:25.0px;height:18.19px;background:#e6e6e6;border-top:1px solid #f4f4f4;border-right:1px solid #d6d6d6"></div>
<div class="a" style="left:104px;top:440.73px;width:57px;height:18.19px;background:#aec2dc"></div>
<div class="a" style="left:425px;top:440.73px;width:214.79999999999995px;height:18.19px;background:#b0dfe4"></div>
<div class="hd" style="left:1.2px;top:441.53px;width:25.5px;line-height:18.19px;font-size:12.4px">18</div>
<div class="cell" style="left:46px;top:441.63px;width:58px;line-height:18.19px;font-size:12.6px;letter-spacing:-0.35px">ATP</div>
<div class="cell" style="left:106px;top:441.63px;width:55px;line-height:18.19px;font-size:12.6px;letter-spacing:-0.35px">O3'</div>
<div class="cell" style="left:163px;top:441.63px;width:84px;line-height:18.19px;font-size:12.6px;letter-spacing:-0.35px">O</div>
<div class="cell" style="left:249px;top:441.63px;width:80px;line-height:18.19px;font-size:12.6px;letter-spacing:-0.35px">OH1</div>
<div class="cell" style="left:329px;top:441.83px;width:92.8px;text-align:right;line-height:18.19px;font-size:13px">.</div>
<div class="cell" style="left:425px;top:441.83px;width:68.8px;text-align:right;line-height:18.19px;font-size:13px">−4.033000</div>
<div class="cell" style="left:497px;top:441.83px;width:68.8px;text-align:right;line-height:18.19px;font-size:13px">0.165000</div>
<div class="cell" style="left:569px;top:441.83px;width:67.59999999999995px;text-align:right;line-height:18.19px;font-size:13px">2.534000</div>
<div class="a" style="left:2px;top:458.92px;width:25.0px;height:18.19px;background:#e6e6e6;border-top:1px solid #f4f4f4;border-right:1px solid #d6d6d6"></div>
<div class="a" style="left:104px;top:458.92px;width:57px;height:18.19px;background:#aec2dc"></div>
<div class="a" style="left:425px;top:458.92px;width:214.79999999999995px;height:18.19px;background:#b0dfe4"></div>
<div class="hd" style="left:1.2px;top:459.72px;width:25.5px;line-height:18.19px;font-size:12.4px">19</div>
<div class="cell" style="left:46px;top:459.82px;width:58px;line-height:18.19px;font-size:12.6px;letter-spacing:-0.35px">ATP</div>
<div class="cell" style="left:106px;top:459.82px;width:55px;line-height:18.19px;font-size:12.6px;letter-spacing:-0.35px">C2'</div>
<div class="cell" style="left:163px;top:459.82px;width:84px;line-height:18.19px;font-size:12.6px;letter-spacing:-0.35px">C</div>
<div class="cell" style="left:249px;top:459.82px;width:80px;line-height:18.19px;font-size:12.6px;letter-spacing:-0.35px">CH1</div>
<div class="cell" style="left:329px;top:460.02px;width:92.8px;text-align:right;line-height:18.19px;font-size:13px">.</div>
<div class="cell" style="left:425px;top:460.02px;width:68.8px;text-align:right;line-height:18.19px;font-size:13px">−2.011000</div>
<div class="cell" style="left:497px;top:460.02px;width:68.8px;text-align:right;line-height:18.19px;font-size:13px">0.555000</div>
<div class="cell" style="left:569px;top:460.02px;width:67.59999999999995px;text-align:right;line-height:18.19px;font-size:13px">3.856000</div>
<div class="a" style="left:2px;top:477.11px;width:25.0px;height:18.19px;background:#e6e6e6;border-top:1px solid #f4f4f4;border-right:1px solid #d6d6d6"></div>
<div class="a" style="left:104px;top:477.11px;width:57px;height:18.19px;background:#aec2dc"></div>
<div class="a" style="left:425px;top:477.11px;width:214.79999999999995px;height:18.19px;background:#b0dfe4"></div>
<div class="hd" style="left:1.2px;top:477.91px;width:25.5px;line-height:18.19px;font-size:12.4px">20</div>
<div class="cell" style="left:46px;top:478.01px;width:58px;line-height:18.19px;font-size:12.6px;letter-spacing:-0.35px">ATP</div>
<div class="cell" style="left:106px;top:478.01px;width:55px;line-height:18.19px;font-size:12.6px;letter-spacing:-0.35px">O2'</div>
<div class="cell" style="left:163px;top:478.01px;width:84px;line-height:18.19px;font-size:12.6px;letter-spacing:-0.35px">O</div>
<div class="cell" style="left:249px;top:478.01px;width:80px;line-height:18.19px;font-size:12.6px;letter-spacing:-0.35px">OH1</div>
<div class="cell" style="left:329px;top:478.21px;width:92.8px;text-align:right;line-height:18.19px;font-size:13px">.</div>
<div class="cell" style="left:425px;top:478.21px;width:68.8px;text-align:right;line-height:18.19px;font-size:13px">−2.926000</div>
<div class="cell" style="left:497px;top:478.21px;width:68.8px;text-align:right;line-height:18.19px;font-size:13px">0.043000</div>
<div class="cell" style="left:569px;top:478.21px;width:67.59999999999995px;text-align:right;line-height:18.19px;font-size:13px">4.827000</div>
<div class="a" style="left:2px;top:495.3px;width:25.0px;height:18.19px;background:#e6e6e6;border-top:1px solid #f4f4f4;border-right:1px solid #d6d6d6"></div>
<div class="a" style="left:104px;top:495.3px;width:57px;height:18.19px;background:#aec2dc"></div>
<div class="a" style="left:425px;top:495.3px;width:214.79999999999995px;height:18.19px;background:#b0dfe4"></div>
<div class="hd" style="left:1.2px;top:496.1px;width:25.5px;line-height:18.19px;font-size:12.4px">21</div>
<div class="cell" style="left:46px;top:496.2px;width:58px;line-height:18.19px;font-size:12.6px;letter-spacing:-0.35px">ATP</div>
<div class="cell" style="left:106px;top:496.2px;width:55px;line-height:18.19px;font-size:12.6px;letter-spacing:-0.35px">C1'</div>
<div class="cell" style="left:163px;top:496.2px;width:84px;line-height:18.19px;font-size:12.6px;letter-spacing:-0.35px">C</div>
<div class="cell" style="left:249px;top:496.2px;width:80px;line-height:18.19px;font-size:12.6px;letter-spacing:-0.35px">CH1</div>
<div class="cell" style="left:329px;top:496.4px;width:92.8px;text-align:right;line-height:18.19px;font-size:13px">.</div>
<div class="cell" style="left:425px;top:496.4px;width:68.8px;text-align:right;line-height:18.19px;font-size:13px">−0.830000</div>
<div class="cell" style="left:497px;top:496.4px;width:68.8px;text-align:right;line-height:18.19px;font-size:13px">−0.418000</div>
<div class="cell" style="left:569px;top:496.4px;width:67.59999999999995px;text-align:right;line-height:18.19px;font-size:13px">3.647000</div>
<div class="a" style="left:2px;top:513.49px;width:25.0px;height:18.19px;background:#e6e6e6;border-top:1px solid #f4f4f4;border-right:1px solid #d6d6d6"></div>
<div class="a" style="left:104px;top:513.49px;width:57px;height:18.19px;background:#aec2dc"></div>
<div class="a" style="left:425px;top:513.49px;width:214.79999999999995px;height:18.19px;background:#b0dfe4"></div>
<div class="hd" style="left:1.2px;top:514.29px;width:25.5px;line-height:18.19px;font-size:12.4px">22</div>
<div class="cell" style="left:46px;top:514.39px;width:58px;line-height:18.19px;font-size:12.6px;letter-spacing:-0.35px">ATP</div>
<div class="cell" style="left:106px;top:514.39px;width:55px;line-height:18.19px;font-size:12.6px;letter-spacing:-0.35px">N9</div>
<div class="cell" style="left:163px;top:514.39px;width:84px;line-height:18.19px;font-size:12.6px;letter-spacing:-0.35px">N</div>
<div class="cell" style="left:249px;top:514.39px;width:80px;line-height:18.19px;font-size:12.6px;letter-spacing:-0.35px">N</div>
<div class="cell" style="left:329px;top:514.59px;width:92.8px;text-align:right;line-height:18.19px;font-size:13px">.</div>
<div class="cell" style="left:425px;top:514.59px;width:68.8px;text-align:right;line-height:18.19px;font-size:13px">0.332000</div>
<div class="cell" style="left:497px;top:514.59px;width:68.8px;text-align:right;line-height:18.19px;font-size:13px">0.015000</div>
<div class="cell" style="left:569px;top:514.59px;width:67.59999999999995px;text-align:right;line-height:18.19px;font-size:13px">4.425000</div>
<div class="ln" style="left:43px;top:131.5px;width:1px;height:398.5px"></div>
<div class="ln" style="left:103px;top:131.5px;width:1px;height:398.5px"></div>
<div class="ln" style="left:160px;top:131.5px;width:1px;height:398.5px"></div>
<div class="ln" style="left:246px;top:131.5px;width:1px;height:398.5px"></div>
<div class="ln" style="left:328px;top:131.5px;width:1px;height:398.5px"></div>
<div class="ln" style="left:424px;top:131.5px;width:1px;height:398.5px"></div>
<div class="ln" style="left:496px;top:131.5px;width:1px;height:398.5px"></div>
<div class="ln" style="left:568px;top:131.5px;width:1px;height:398.5px"></div>
<div class="ln" style="left:638.8px;top:131.5px;width:1px;height:398.5px"></div>
<div class="ln" style="left:2px;top:148.69px;width:637.8px;height:1px"></div>
<div class="ln" style="left:2px;top:166.88px;width:637.8px;height:1px"></div>
<div class="ln" style="left:2px;top:185.07px;width:637.8px;height:1px"></div>
<div class="ln" style="left:2px;top:203.26px;width:637.8px;height:1px"></div>
<div class="ln" style="left:2px;top:221.45px;width:637.8px;height:1px"></div>
<div class="ln" style="left:2px;top:239.64px;width:637.8px;height:1px"></div>
<div class="ln" style="left:2px;top:257.83px;width:637.8px;height:1px"></div>
<div class="ln" style="left:2px;top:276.02px;width:637.8px;height:1px"></div>
<div class="ln" style="left:2px;top:294.21px;width:637.8px;height:1px"></div>
<div class="ln" style="left:2px;top:312.4px;width:637.8px;height:1px"></div>
<div class="ln" style="left:2px;top:330.59px;width:637.8px;height:1px"></div>
<div class="ln" style="left:2px;top:348.78px;width:637.8px;height:1px"></div>
<div class="ln" style="left:2px;top:366.97px;width:637.8px;height:1px"></div>
<div class="ln" style="left:2px;top:385.16px;width:637.8px;height:1px"></div>
<div class="ln" style="left:2px;top:403.35px;width:637.8px;height:1px"></div>
<div class="ln" style="left:2px;top:421.54px;width:637.8px;height:1px"></div>
<div class="ln" style="left:2px;top:439.73px;width:637.8px;height:1px"></div>
<div class="ln" style="left:2px;top:457.92px;width:637.8px;height:1px"></div>
<div class="ln" style="left:2px;top:476.11px;width:637.8px;height:1px"></div>
<div class="ln" style="left:2px;top:494.3px;width:637.8px;height:1px"></div>
<div class="ln" style="left:2px;top:512.49px;width:637.8px;height:1px"></div>
<div class="ln" style="left:2px;top:530.68px;width:637.8px;height:1px"></div>
<div class="a" style="left:27.8px;top:132px;width:16px;height:17px;border:1.7px solid #000;background:#fff"></div>
<div class="a" style="left:714px;top:102.5px;width:14px;height:427.5px;background:linear-gradient(90deg,#d6d6d6,#f2f2f2 35%,#fff 70%,#e6e6e6);border-left:1px solid #c0c0c0"></div>
<div class="a" style="left:715px;top:117.5px;width:10.8px;height:180.5px;border-radius:6px;background:linear-gradient(90deg,#1a46bc 0,#2a5cc8 8%,#8ab6ec 22%,#72a8ea 38%,#4f92e6 52%,#86c4f6 70%,#a6e0ff 84%,#86c0f2 100%);box-shadow:inset 0 -2px 2px rgba(0,40,160,.6),inset 0 2px 2px rgba(0,40,160,.7),inset 1px 0 1px rgba(0,30,140,.5)"></div>
<div class="a" style="left:725.8px;top:102.5px;width:2.2px;height:427.5px;background:linear-gradient(90deg,#b0b0b0,#8e8e8e)"></div>
<div class="a" style="left:715px;top:478px;width:10.8px;height:36.5px;border-radius:0 0 6px 6px;background:linear-gradient(rgba(0,0,0,0) 40%,rgba(0,0,0,.16)),linear-gradient(90deg,#d2d2d2,#f3f3f3 40%,#fafafa 65%,#dcdcdc);border-bottom:1px solid rgba(0,0,0,.12)"></div>
<svg class="a" style="left:0;top:0" width="728" height="546"><polygon points="721,107.8 718.6,112.3 723.4,112.3" fill="#111"/><polygon points="720.8,524.2 718.3,519.6 723.3,519.6" fill="#111"/></svg>
<div class="a" style="left:0;top:529px;width:714px;height:1px;background:#c4c4c4"></div>
<div class="a" style="left:0;top:530px;width:728px;height:16px;background:#e8e8e8;border-top:1px solid #f4f4f4"></div>
<div class="a" style="left:5px;top:531px;font-size:10.5px;color:#222;white-space:nowrap">Welcome to the REEL thing</div>
<svg class="a" style="left:0;top:0" width="728" height="546"><g stroke="#6e6e6e" stroke-width="0.9"><path d="M727 535.8 L716.8 546"/><path d="M727 539.6 L720.6 546"/><path d="M727 543.2 L724.2 546"/></g><g stroke="#fff" stroke-width="0.9"><path d="M727.5 536.8 L718.3 546"/><path d="M727.5 540.6 L722.1 546"/></g></svg>
</div></body></html>
